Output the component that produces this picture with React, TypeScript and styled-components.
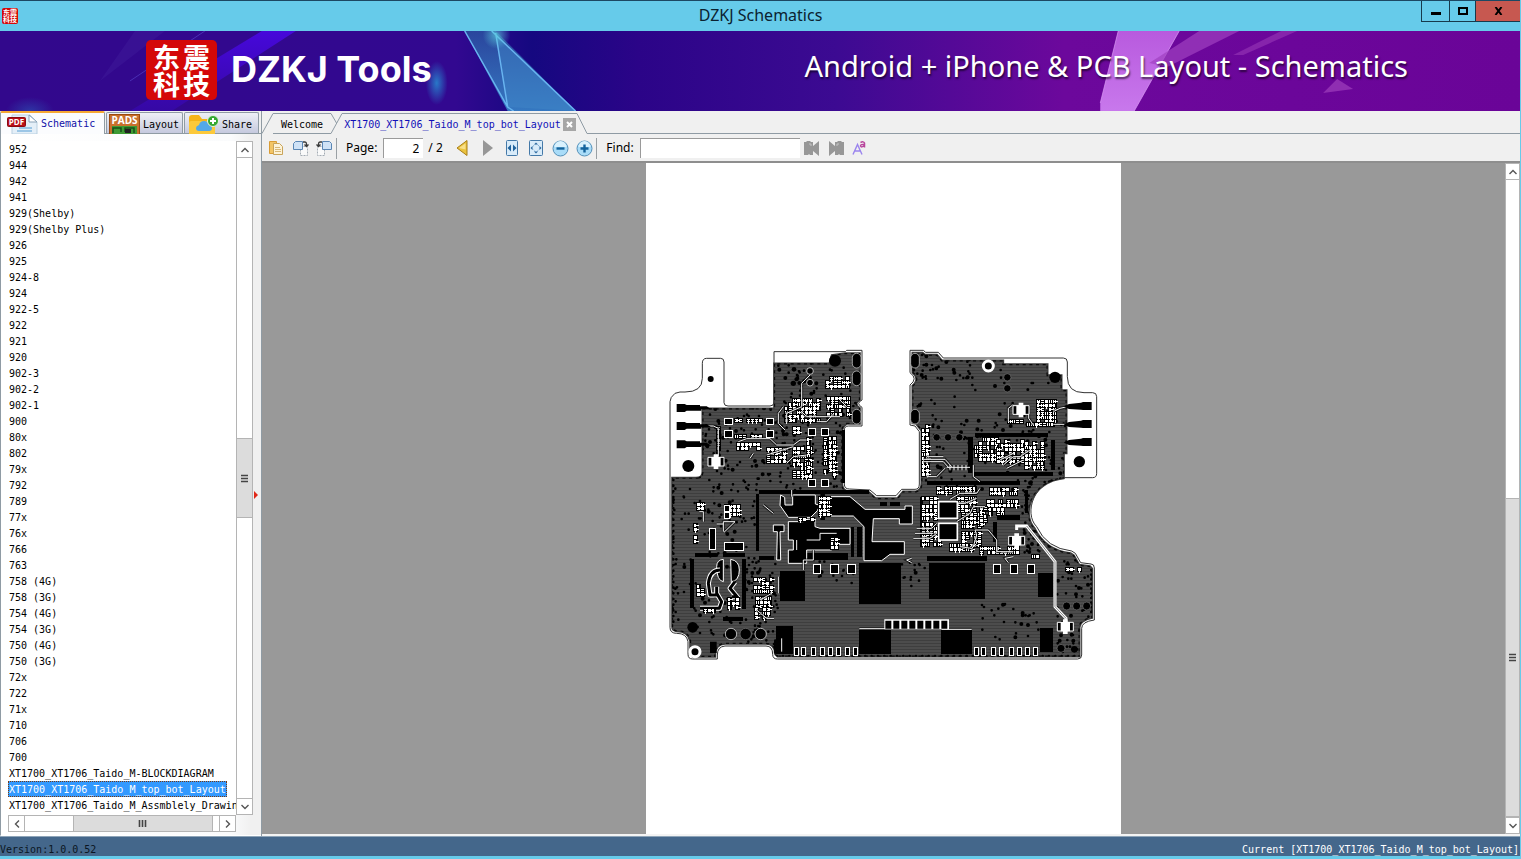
import React from "react";
import styled, { createGlobalStyle, css } from "styled-components";

const mono = `"DejaVu Sans Mono", "Liberation Mono", monospace`;
const ui = `"Noto Sans", "Open Sans", sans-serif`;

const Global = createGlobalStyle`
  * { box-sizing: border-box; }
  body { margin: 0; font-family: ${mono}; font-size: 10px; color: #000; }
  button, input { font: inherit; color: inherit; margin: 0; padding: 0; border: 0; background: none; border-radius: 0; }
  svg { display: block; flex: none; }
`;

/* ---------- window frame ---------- */

const Window = styled.div`
  display: flex;
  flex-direction: column;
  height: 100vh;
  min-height: 480px;
  overflow: hidden;
  background: #f0f0f0;
  border-right: 1px solid #66cbea;
  border-bottom: 3px solid #66cbea;
`;

const TitleBar = styled.header`
  display: grid;
  grid-template-columns: 1fr auto 1fr;
  align-items: center;
  flex: none;
  height: 31px;
  margin-right: -1px;
  border-top: 1px solid #1c4863;
  background: #66cbea;
`;

const Seal = styled.div<{ $large?: boolean }>`
  display: grid;
  grid-template-columns: auto auto;
  place-content: center;
  background: #d40808;
  color: #fff;
  font-family: "Noto Sans CJK SC", sans-serif;
  font-weight: 700;
  ${(p) =>
    p.$large
      ? css`
          width: 71px;
          height: 60px;
          border-radius: 5px;
          font-size: 27px;
          line-height: 27px;
          column-gap: 3px;
        `
      : css`
          width: 16px;
          height: 16px;
          margin-left: 2px;
          border-radius: 2px;
          font-size: 7px;
          line-height: 7px;
        `}
`;

const WindowTitle = styled.h1`
  align-self: start;
  margin: 0;
  font: 400 16px/28px ${ui};
  color: #0b2230;
`;

const WindowButtons = styled.div`
  display: flex;
  justify-self: end;
  align-self: start;
`;

const WindowButton = styled.button<{ $w: number; $close?: boolean }>`
  display: flex;
  align-items: center;
  justify-content: center;
  width: ${(p) => p.$w}px;
  height: 21px;
  border-left: 1px solid #173a4c;
  border-bottom: 1px solid #173a4c;
  background: ${(p) => (p.$close ? "#c75850" : "transparent")};
`;

/* ---------- banner ---------- */

const Banner = styled.div`
  position: relative;
  display: flex;
  align-items: center;
  flex: none;
  height: 80px;
  padding: 0 112px 2px 146px;
  background: #340890;
  color: #fff;
`;

const BannerArt = styled.svg`
  position: absolute;
  inset: 0;
  width: 100%;
  height: 100%;
`;

const Brand = styled.strong`
  z-index: 1;
  margin-left: 14px;
  padding-bottom: 2px;
  font: 700 36px/60px Inter, sans-serif;
`;

const Slogan = styled.span`
  z-index: 1;
  margin-left: auto;
  padding-bottom: 8px;
  white-space: nowrap;
  font: 400 29px/60px ${ui};
  text-shadow: 1px 2px 2px rgba(0, 0, 0, 0.6);
`;

const SealWrap = styled.div`
  z-index: 1;
`;

/* ---------- body ---------- */

const Body = styled.div`
  display: flex;
  flex: 1;
  min-height: 0;
`;

const Side = styled.aside`
  display: flex;
  flex-direction: column;
  flex: none;
  width: 262px;
  border-right: 1px solid #8f9ba4;
`;

const SideTabs = styled.div`
  display: flex;
  align-items: flex-end;
  flex: none;
  height: 23px;
  gap: 1px;
  border-bottom: 1px solid #8f9ba4;
`;

const SideTab = styled.button<{ $active?: boolean; $w: number }>`
  display: flex;
  align-items: center;
  gap: 3px;
  width: ${(p) => p.$w}px;
  height: 21px;
  padding: 2px 0 0 2px;
  border: 1px solid #8f9ba4;
  border-bottom: 0;
  border-radius: 2px 2px 0 0;
  background: linear-gradient(#eef0f6, #c5c9de);
  ${(p) =>
    p.$active &&
    css`
      height: 23px;
      margin-bottom: -1px;
      padding: 0 0 0 6px;
      border-top: 2px solid #f6a834;
      background: #fbfcfe;
      color: #1010a8;
    `}
`;

const SideContent = styled.div`
  display: flex;
  flex: 1;
  min-height: 0;
  padding: 7px 0 3px 7px;
  border-left: 1px solid #8f9ba4;
  border-bottom: 1px solid #fff;
  background: linear-gradient(90deg, #fff, #fafbfc 230px, #f0f0f0 250px);
`;

const ListColumn = styled.div`
  display: flex;
  flex-direction: column;
  flex: 1;
  min-width: 0;
`;

const List = styled.ul`
  flex: 1;
  min-height: 0;
  margin: 0;
  padding: 0;
  overflow: hidden;
  list-style: none;
  background: #fff;
`;

const ListItem = styled.button<{ $selected?: boolean }>`
  display: block;
  height: 16px;
  line-height: 16px;
  padding: 1px 0 0 1px;
  white-space: nowrap;
  ${(p) =>
    p.$selected &&
    css`
      padding: 1px 1px 0;
      color: #fff;
      background: #3399ff;
      outline: 1px dotted #7a3a10;
      outline-offset: -1px;
    `}
`;

const Splitter = styled.div`
  display: flex;
  align-items: center;
  flex: none;
  width: 8px;
  padding-top: 16px;
`;

/* ---------- scroll bars ---------- */

const ScrollBar = styled.div<{ $across?: boolean; $w?: number }>`
  display: flex;
  flex: none;
  flex-direction: ${(p) => (p.$across ? "row" : "column")};
  ${(p) => (p.$across ? "height: 17px;" : `width: ${p.$w ?? 17}px;`)}
  border: 1px solid #b4b4b4;
  background: #fff;
`;

const ScrollArrow = styled.button<{ $across?: boolean }>`
  display: flex;
  align-items: center;
  justify-content: center;
  flex: none;
  ${(p) => (p.$across ? "width: 16px;" : "height: 16px;")}
  background: #fff;
  &:first-child { ${(p) => (p.$across ? "border-right" : "border-bottom")}: 1px solid #b4b4b4; }
  &:last-child { ${(p) => (p.$across ? "border-left" : "border-top")}: 1px solid #b4b4b4; }
`;

const Track = styled.div<{ $grow: number }>`
  flex: ${(p) => p.$grow} 1 0;
`;

const Thumb = styled.div<{ $grow: number; $across?: boolean }>`
  display: flex;
  align-items: center;
  justify-content: center;
  flex: ${(p) => p.$grow} 1 0;
  background: #dcdcdc;
  border: 0 solid #b4b4b4;
  border-width: ${(p) => (p.$across ? "0 1px" : "1px 0")};
`;

const Arrow = ({ turn }: { turn: number }) => (
  <svg width="10" height="10" viewBox="0 0 10 10">
    <path d="M1.5 7 5 3.5 8.5 7" fill="none" stroke="#555" strokeWidth="1.4" transform={`rotate(${turn} 5 5)`} />
  </svg>
);

const Grip = ({ turn = 0 }: { turn?: number }) => (
  <svg width="9" height="9" viewBox="0 0 9 9">
    <path d="M1 1.5h7M1 4.5h7M1 7.5h7" stroke="#444" strokeWidth="1.600" transform={`rotate(${turn} 4.5 4.5)`} />
  </svg>
);

/* ---------- documents ---------- */

const Main = styled.main`
  display: flex;
  flex-direction: column;
  flex: 1;
  min-width: 0;
`;

const DocTabs = styled.div`
  display: flex;
  flex: none;
  height: 23px;
  padding-top: 2px;
`;

const DocTab = styled.button<{ $active?: boolean }>`
  padding: 1px ${(p) => (p.$active ? 2 : 8)}px 0;
  border-top: 1px solid #8f9ba4;
  border-bottom: 1px solid ${(p) => (p.$active ? "transparent" : "#8f9ba4")};
  color: ${(p) => (p.$active ? "#1010b8" : "#000")};
  white-space: nowrap;
`;

const TabClose = styled.button`
  display: flex;
  align-items: center;
  justify-content: center;
  width: 14px;
  border-top: 1px solid #8f9ba4;
`;

const TabRest = styled.div`
  flex: 1;
  border-bottom: 1px solid #8f9ba4;
`;

const Toolbar = styled.div`
  display: flex;
  align-items: center;
  flex: none;
  height: 29px;
  padding: 1px 0 0 2px;
  border-bottom: 2px solid #8e8e8e;
  font: 400 12px/16px ${ui};
`;

const Tool = styled.button`
  display: flex;
  align-items: center;
  justify-content: center;
  flex: none;
  width: 24px;
  height: 24px;
`;

const Divider = styled.span`
  width: 1px;
  height: 21px;
  margin-right: 9px;
  background: #9aa0a4;
`;

const Field = styled.input<{ $w: number }>`
  width: ${(p) => p.$w}px;
  height: 20px;
  margin-left: 6px;
  padding-right: 4px;
  border-top: 1px solid #9a9a9a;
  border-left: 1px solid #9a9a9a;
  background: #fff;
  text-align: ${(p) => (p.$w < 100 ? "right" : "left")};
`;

const PageCount = styled.span`
  width: 27px;
  padding-left: 5px;
  white-space: nowrap;
`;

const Gap = styled.span`
  width: 2px;
`;

const Viewer = styled.div`
  display: flex;
  flex: 1;
  min-height: 0;
  border-bottom: 2px solid #f4f4f4;
`;

const Canvas = styled.div`
  display: flex;
  justify-content: center;
  flex: 1;
  min-width: 0;
  overflow: hidden;
  background: #999;
`;

const Sheet = styled.div`
  flex: none;
  width: 475px;
  padding: 177px 0 0 14px;
  background: #fff;
`;

const StatusBar = styled.footer`
  display: flex;
  align-items: center;
  justify-content: space-between;
  flex: none;
  height: 20px;
  padding: 5px 1px 0 0;
  border-top: 1px solid #8ea4b8;
  background: #44678b;
  color: #0b1622;
`;

const Current = styled.span`
  color: #fff;
`;

/* ---------- icons ---------- */

const PdfIcon = () => (
  <svg width="31" height="20" viewBox="0 0 31 20">
    <path d="M5 1h18l7 7v12H5z" fill="#e4eff8" stroke="#b9cfe0" />
    <path d="M22 1v7h8z" fill="#fff" stroke="#8aa3b8" />
    <path d="M12 14h13M10 17h15" stroke="#9cc6e6" strokeWidth="2" />
    <rect x=".5" y="3.5" width="18" height="9" rx="1" fill="#b80f18" stroke="#8a0a10" />
    <text x="9.500" y="11" textAnchor="middle" fontFamily="Open Sans, sans-serif" fontWeight="700" fontSize="8" fill="#fff">PDF</text>
  </svg>
);

const PadsIcon = () => (
  <svg width="31" height="20" viewBox="0 0 31 20">
    <rect x=".5" y=".5" width="30" height="20" fill="#c8702c" stroke="#9a4a10" />
    <rect x="3" y="12" width="25" height="8" fill="#3e9a34" />
    <path d="M4 19v-5h8v4m4 0v-4h9v5" stroke="#185018" fill="none" strokeWidth="1.500" />
    <rect x="16" y="15" width="6" height="4" fill="#222" />
    <text x="15.500" y="10" textAnchor="middle" fontFamily="Open Sans, sans-serif" fontWeight="700" fontSize="10" fill="#fff">PADS</text>
  </svg>
);

const FolderIcon = () => (
  <svg width="32" height="20" viewBox="0 0 32 20">
    <path d="M2 20V4q0-3 3-3h7l3 4h9q3 0 3 3v12z" fill="#f5b418" />
    <path d="M2 20V9q0-2 2-2h21q3 0 3 3v10z" fill="#fcc93a" />
    <path d="M12 17q-3 0-3-3 0-2 3-3 1-4 5-4 4 0 5 4 3 1 3 3 0 3-3 3z" fill="#52a8e8" />
    <circle cx="26" cy="7" r="5.500" fill="#36a832" stroke="#e6f4e4" />
    <path d="M26 4v6M23 7h6" stroke="#fff" strokeWidth="2" />
  </svg>
);

const CopyIcon = () => (
  <svg width="16" height="16" viewBox="0 0 16 16">
    <path d="M1.500 1.500h7v12h-7z" fill="#f3c565" stroke="#d99c35" />
    <path d="M5.500 3.500h6l3 3v8h-9z" fill="#fdf3d8" stroke="#c9a45a" />
    <path d="M7 7.500h5M7 9.500h6M7 11.500h6" stroke="#d8b878" />
  </svg>
);

const RotateIcon = ({ flip }: { flip?: boolean }) => (
  <svg width="17" height="17" viewBox="0 0 17 17">
    <g transform={flip ? "matrix(-1 0 0 1 17 0)" : undefined}>
      <path d="M8.500 6.500h7v9h-7z" fill="#fafafa" stroke="#a4acb4" strokeDasharray="2 1" />
      <path d="M1.500 3.500l2-2h7v8h-9z" fill="#cfe2f6" stroke="#5a86b4" />
      <path d="M11 2h2q1.500 0 1.500 2v2M12.500 4.500l2 2 2-2" fill="none" stroke="#3a3a3a" strokeWidth="1.300" />
    </g>
  </svg>
);

const PrevIcon = () => (
  <svg width="14" height="18" viewBox="0 0 14 18">
    <path d="M12 1.500v15L2 9z" fill="#eac23e" stroke="#a87e18" strokeLinejoin="round" />
    <path d="M10.500 4.500v6L4 9z" fill="#f8e08a" />
  </svg>
);

const NextIcon = () => (
  <svg width="14" height="18" viewBox="0 0 14 18">
    <path d="M2 1v16l10-8z" fill="#979797" />
  </svg>
);

const FitIcon = ({ whole }: { whole?: boolean }) => (
  <svg width="14" height="16" viewBox="0 0 14 16">
    <rect x={whole ? 0.5 : 1.5} y=".5" width={whole ? 13 : 11} height="15" rx="1" fill="#d8ebf9" stroke="#4479a8" />
    {whole ? (
      <path d="M5 4.500l2-2 2 2zM5 11.500l2 2 2-2zM3.500 6l-2 2 2 2zM10.500 6l2 2-2 2z" fill="#2a669c" stroke="none" />
    ) : (
      <path d="M6 4.500v7L2.500 8zM8 4.500v7L11.500 8z" fill="#21639c" />
    )}
    {whole && <circle cx="7" cy="8" r="3.500" fill="none" stroke="#6a9cc6" strokeDasharray="1.500 1.500" />}
  </svg>
);

const ZoomIcon = ({ plus }: { plus?: boolean }) => (
  <svg width="17" height="17" viewBox="0 0 17 17">
    <circle cx="8.500" cy="8.500" r="7.500" fill="#a9dcf8" stroke="#5590b8" />
    <path d="M2.500 7a6 6 0 0 1 12 0z" fill="#d9f1fd" />
    <path d={plus ? "M4.500 8.500h8M8.500 4.500v8" : "M4.500 8.500h8"} stroke="#14639c" strokeWidth="2.400" />
  </svg>
);

const FindIcon = ({ flip }: { flip?: boolean }) => (
  <svg width="16" height="16" viewBox="0 0 16 16">
    <g transform={flip ? "matrix(-1 0 0 1 16 0)" : undefined}>
      <path d="M0 2h2l1-1h3l1 1h2v4l6-5v15l-6-5v4H6l-1-1-1 1H0z" fill="#979797" />
      <path d="M5 4h2v2" stroke="#c4c4c4" fill="none" />
    </g>
  </svg>
);

const CaseIcon = () => (
  <svg width="15" height="16" viewBox="0 0 15 16">
    <path d="M1 14.500 5.500 4.500 10 14.500M2.500 11h6" fill="none" stroke="#9a84ee" strokeWidth="1.400" />
    <path d="M8.500 2.500q3-1.500 4 .5v4.500M12.500 4.500q-4-.5-4 1.500 1 2 4-.5" fill="none" stroke="#b8459c" strokeWidth="1.500" />
  </svg>
);

/* ---------- circuit board, drawn in thirds of a pixel ---------- */

const OUTLINE =
  "M30 185Q30 172 45 160Q60 154 75 156Q127 156 127 115V70Q127 55 140 55H182Q192 55 192 66V188Q192 198 204 198H330Q342 198 342 186V35H556L560 31H606V180Q586 190 606 202V258H566Q553 258 553 270V432Q553 447 568 447L630 450 650 467H708L725 448H765Q778 448 778 432V275L765 258 750 255V135Q775 116 750 98V31H790L797 37H835L850 54H1210Q1222 54 1222 66V110Q1222 158 1272 158H1298Q1310 158 1310 170V400Q1310 413 1298 413H1212C1120 420 1090 520 1130 560Q1160 625 1235 633L1246 640 1262 668 1293 672Q1303 672 1303 684V840Q1265 845 1265 865V945Q1265 957 1253 957H1010V957H352Q338 957 338 943Q338 918 318 918H195Q172 920 172 945V957H98Q84 957 84 943V905Q80 880 50 880Q30 880 30 862Z";

const COPPER =
  "M127 205H342V70H508L515 45 556 39H600V180Q580 190 600 204V252H560Q546 262 547 275V435Q550 453 565 453L627 456 647 474H712L729 454H768Q784 450 784 430V272L768 252 757 250V137Q780 116 757 98V38H788L795 44H831L846 61H1030V72H1163V105H1205V150H1220V340H1212V415C1115 425 1084 522 1124 564Q1156 630 1232 639L1242 646 1258 674 1290 678 1297 686V834Q1259 842 1259 862V950H352Q344 945 344 940Q344 912 318 912H195Q166 914 166 945V951H98L90 940V903Q84 874 50 874 36 872 36 860V413H108Q127 413 127 395Z";

function rng(seed: number) {
  let s = seed;
  return () => {
    s = (s * 16807) % 2147483647;
    return s / 2147483647;
  };
}

/** Dense field of small parts: solid pads, split pads, and short links between neighbours. */
function cluster(x: number, y: number, w: number, h: number, seed: number) {
  const r = rng(seed * 7919 + 11);
  let white = "";
  let black = "";
  for (let j = 0; j + 9 <= h; j += 12) {
    for (let i = 0; i + 9 <= w; i += 12) {
      const k = r();
      const px = x + i;
      const py = y + j;
      if (k < 0.14) continue;
      black += `M${px - 3} ${py - 3}h15v15h-15z`;
      if (k < 0.45) white += `M${px} ${py}h9v9h-9z`;
      else if (k < 0.6) white += `M${px} ${py}h6v9h-6z`;
      else if (k < 0.8) white += `M${px} ${py}h9v3h-9zM${px} ${py + 6}h9v3h-9z`;
      else white += `M${px} ${py}h3v9h-3zM${px + 6} ${py}h3v9h-3z`;
      if (r() < 0.35) white += `M${px + 3} ${py + 3}h12v3h-12z`;
      if (r() < 0.3) white += `M${px + 3} ${py + 3}h3v12h-3z`;
    }
  }
  return { white, black };
}

const CLUSTERS: number[][] = [
  [375, 178, 110, 72], [498, 112, 72, 40], [500, 170, 70, 60], [400, 262, 30, 30],
  [232, 310, 80, 26], [322, 325, 60, 50], [400, 320, 60, 100], [508, 290, 30, 118],
  [440, 295, 14, 110], [492, 295, 14, 110], [170, 262, 18, 80], [225, 236, 90, 12], [225, 284, 90, 12],
  [1130, 180, 62, 75], [1045, 240, 50, 14], [1100, 250, 85, 14], [785, 255, 24, 160],
  [945, 295, 72, 80], [1010, 300, 90, 80], [1095, 305, 62, 85], [830, 440, 120, 28],
  [990, 445, 90, 30], [980, 480, 100, 28], [787, 470, 50, 80], [787, 550, 60, 74],
  [890, 470, 60, 50], [905, 520, 70, 55], [905, 575, 60, 56], [975, 505, 60, 26],
  [870, 612, 70, 30], [960, 500, 30, 60],
  [960, 620, 120, 26], [1105, 645, 36, 16], [103, 540, 20, 80], [112, 490, 32, 26],
  [194, 496, 50, 40], [283, 715, 60, 50], [288, 770, 54, 38], [285, 805, 50, 34],
  [110, 735, 26, 40], [203, 775, 34, 40], [132, 808, 36, 12], [1217, 685, 54, 16],
  [512, 595, 26, 44], [418, 535, 56, 14], [478, 470, 34, 66],
];

const BLOCKS: number[][] = [
  [360, 693, 75, 90], [598, 668, 126, 125], [808, 668, 167, 110], [1133, 698, 47, 74], [1140, 865, 38, 72],
  [843, 870, 92, 72], [598, 870, 94, 73], [348, 858, 50, 85],
  [298, 450, 330, 12], [288, 462, 8, 170], [90, 658, 12, 145], [245, 658, 12, 150], [105, 638, 64, 12],
  [190, 638, 64, 12], [190, 830, 60, 14], [800, 422, 280, 12], [945, 278, 220, 12], [925, 290, 14, 110],
  [940, 396, 240, 12], [1172, 300, 12, 90], [573, 560, 10, 90], [592, 560, 14, 90], [298, 648, 45, 12],
  [545, 270, 9, 160], [780, 470, 10, 150], [1095, 450, 8, 70], [1010, 525, 70, 14], [800, 648, 180, 16],
  [660, 486, 20, 12], [690, 486, 30, 12], [425, 640, 140, 20], [1000, 545, 12, 60],
];

const OPEN_PADS: number[][] = [
  [460, 674, 22, 26], [512, 674, 22, 26], [563, 674, 22, 26],
  [1000, 674, 22, 26], [1051, 674, 22, 26], [1102, 674, 22, 26],
  ...[402, 424, 455, 480, 505, 530, 557, 580].map((x) => [x, 923, 12, 24]),
  ...[942, 964, 994, 1018, 1047, 1071, 1097, 1121].map((x) => [x, 923, 12, 24]),
  [446, 266, 20, 20], [485, 266, 20, 20], [446, 418, 20, 20], [485, 418, 20, 20],
  [194, 234, 22, 20], [320, 234, 20, 20], [194, 272, 22, 20], [320, 272, 20, 20],
  [192, 606, 58, 26], [148, 565, 18, 62], [194, 496, 14, 18], [194, 518, 14, 18],
];

const DOTS: number[][] = [
  [152, 117, 9], [85, 378, 18], [525, 62, 18], [1185, 112, 17], [1258, 365, 17], [98, 862, 16],
  [400, 130, 8], [402, 88, 7], [1243, 928, 10],
];

/* x, y, radius, ring colour */
const RINGS: [number, number, number, string][] = [
  [450, 93, 10, "#fff"], [450, 128, 10, "#fff"],
  [213, 882, 17, "#fff"], [257, 882, 17, "#777"], [302, 882, 17, "#fff"],
  [1042, 112, 11, "#777"], [1042, 145, 11, "#777"],
  [830, 292, 11, "#777"], [864, 292, 11, "#777"], [898, 292, 11, "#777"],
  [1220, 798, 12, "#777"], [1250, 798, 12, "#777"], [1280, 798, 12, "#777"], [1203, 925, 12, "#777"],
];

const POWER = [
  "M362 465L374 472 375 495H398V465H466V492L480 496 472 512 452 532H385L360 496Z",
  "M500 470H570L615 508H735V498H757V552H718V536H640L636 605H733V643H690L665 662H612V560L580 528H500Z",
  "M340 555H372V575H360L362 660H350L352 575H340Z",
  "M385 545H430V538H465V560L480 565H570V613H515V630H440V670H385V630H400V600H385Z",
  "M190 658Q170 660 170 680 170 722 190 725Z",
  "M212 658Q238 662 238 690 238 720 214 728Z",
];

const TRACES = [
  "M450 105L425 130V200L380 220V250M425 215L440 230H540M470 245H500L520 222",
  "M125 258H160L175 265V350M370 200L355 220V250L375 270",
  "M235 305L260 296H330L350 315H400L420 300H440M320 345L400 320",
  "M440 345L400 350 380 370M270 355L280 340M540 180L560 200",
  "M1180 215L1200 205 1222 200M1180 253H1222M1045 245V205L1058 195M1106 200V235L1120 255",
  "M790 365H850L868 385M850 350H800M800 410H830L855 385M940 375V410L960 425",
  "M790 358H855L875 380M860 382h70M870 375v16M882 375v16M894 375v16M906 375v16M918 375v16",
  "M1030 375L1060 350H1080L1110 330M1040 385L1090 360M1020 360L1060 340",
  "M870 478L900 460H950L960 445M880 490H915L950 475M890 545L930 520 940 500 975 500M900 620L935 625 950 610",
  "M940 620L950 585 945 570H985L1010 600V635H1060M765 580H820M760 595H810L830 580M770 565H815L830 550",
  "M395 470V450M310 495L340 520M410 600V630M440 600H480V580H530M460 630V660H430V690",
  "M190 575V545H225L192 577M130 545V515H118M170 552H190M150 575L165 565",
  "M755 655L740 660 755 668M598 866H690M845 868H935M365 895V935M355 710V760",
  "M290 810L320 835H342M300 780L335 760M1045 668L1035 655 1060 650",
];

const LEFT_LINKS = ["M180 690Q150 690 145 730L150 765H175M170 740V760L185 785 178 805H120M225 725L210 745 235 775M215 770H232"];

function vias() {
  const r = rng(4242);
  let d = "";
  const dot = (x: number, y: number, s: number) => {
    d += `M${x - s} ${y}a${s} ${s} 0 1 0 ${2 * s} 0a${s} ${s} 0 1 0 ${-2 * s} 0`;
  };
  const scatter = (x: number, y: number, w: number, h: number, n: number) => {
    for (let i = 0; i < n; i++) dot(Math.round(x + r() * w), Math.round(y + r() * h), r() < 0.2 ? 6 : 4);
  };
  scatter(36, 205, 300, 245, 120);
  scatter(36, 450, 250, 450, 130);
  scatter(345, 70, 255, 380, 160);
  scatter(760, 60, 450, 190, 50);
  scatter(760, 40, 180, 80, 24);
  scatter(790, 250, 430, 200, 120);
  scatter(1085, 420, 100, 220, 80);
  scatter(1190, 650, 100, 290, 60);
  scatter(255, 650, 100, 290, 55);
  scatter(950, 790, 190, 110, 28);
  scatter(440, 660, 150, 70, 18);
  scatter(725, 660, 70, 80, 14);
  for (let x = 350; x < 1260; x += 19) dot(x, 948, 4);
  for (let y = 420; y < 860; y += 17) dot(40, y, 4);
  for (let y = 690; y < 830; y += 14) dot(1294, y, 4);
  return d;
}

const VIAS = vias();
const FIELDS = CLUSTERS.map(([x, y, w, h], i) => cluster(x, y, w, h, i + 1));

const boxes = (list: number[][]) => list.map(([x, y, w, h]) => `M${x} ${y}h${w}v${h}h${-w}z`).join("");

const Switch = ({ x, y }: { x: number; y: number }) => (
  <g>
    <path d={`M${x - 24} ${y - 13}h48v26h-48z`} fill="#000" stroke="#fff" strokeWidth="3" />
    <path d={`M${x - 7} ${y - 22}h14v44h-14zM${x - 14} ${y - 14}h28v28h-28z`} fill="#fff" />
  </g>
);

const Board = () => (
  <svg width="440" height="324" viewBox="0 0 1320 972" role="img" aria-label="Circuit board, bottom layer">
    <defs>
      <pattern id="hatch" width="12" height="9" patternUnits="userSpaceOnUse">
        <rect width="12" height="9" fill="#4c4c4c" />
        <rect width="12" height="3" fill="#3e3e3e" />
      </pattern>
      <clipPath id="copper"><path d={COPPER} /></clipPath>
    </defs>
    <path d={OUTLINE} fill="#fff" stroke="#333" strokeWidth="3" />
    <path d={COPPER} fill="url(#hatch)" stroke="#3c3c3c" strokeWidth="5" />
    <g clipPath="url(#copper)">
      <path d={VIAS} fill="#000" />
      <path d={COPPER} fill="none" stroke="#0a0a0a" strokeWidth="7" strokeDasharray="9 11" />
    </g>
    <path d={boxes(BLOCKS)} fill="#000" shapeRendering="crispEdges" />
    {POWER.map((d) => <path key={d} d={d} fill="#000" stroke="#fff" strokeWidth="3" />)}
    {LEFT_LINKS.map((d) => (
      <g key={d} fill="none" strokeLinejoin="round">
        <path d={d} stroke="#fff" strokeWidth="15" />
        <path d={d} stroke="#000" strokeWidth="9" />
      </g>
    ))}
    <path d="M488 450V540" stroke="#000" strokeWidth="14" />
    {FIELDS.map((f, i) => (
      <g key={i} shapeRendering="crispEdges">
        <path d={f.black} fill="#000" />
        <path d={f.white} fill="#fff" />
      </g>
    ))}
    <path d={TRACES.join("")} fill="none" stroke="#000" strokeWidth="9" opacity=".6" />
    <path d={TRACES.join("")} fill="none" stroke="#f4f4f4" strokeWidth="3" />
    <path d={boxes(OPEN_PADS)} fill="#000" stroke="#fff" strokeWidth="3" shapeRendering="crispEdges" />
    <path d="M673 838h194v30h-194z" fill="#fff" />
    <path d={boxes([0, 1, 2, 3, 4, 5, 6, 7].map((i) => [676 + i * 24, 842, 18, 24]))} fill="#000" />
    {[485, 550].map((y) => <rect key={y} x="836" y={y} width="56" height="50" fill="#000" stroke="#fff" strokeWidth="5" />)}
    <path d="M1070 570V558H1100L1185 665V800L1218 835V850" fill="none" stroke="#fff" strokeWidth="9" />
    <path d="M1100 558L1185 665V800L1218 835" fill="none" stroke="#888" strokeWidth="3" />
    <Switch x={1070} y={602} />
    <Switch x={1216} y={860} />
    <Switch x={168} y={365} />
    <Switch x={1083} y={210} />
    {RINGS.map(([x, y, r, c]) => <circle key={`${x}-${y}`} cx={x} cy={y} r={r} fill="#000" stroke={c} strokeWidth="2" />)}
    {DOTS.map(([x, y, r]) => <circle key={`${x}-${y}`} cx={x} cy={y} r={r} fill="#000" />)}
    {[[105, 935], [985, 78]].map(([x, y]) => (
      <circle key={x} cx={x} cy={y} r="15" fill="#000" stroke="#fff" strokeWidth="9" />
    ))}
    {[[590, 62], [590, 115], [590, 230], [765, 62], [765, 230]].map(([x, y]) => (
      <rect key={`${x}-${y}`} x={x - 13} y={y - 22} width="26" height="44" rx="13" fill="#000" stroke="#ddd" strokeWidth="2" />
    ))}
    {[204, 258, 313].map((y) => (
      <path key={y} d={`M50 ${y - 12}h24l6 3h40v4h20l14 9h-30v4h-44l-6 4h-24z`} fill="#000" />
    ))}
    {[198, 252, 306].map((y) => (
      <path key={y} d={`M1295 ${y - 12}h-26l-6 2-36 4-14 6v3l14 6 36 2 6 1h26z`} fill="#000" />
    ))}
    <path d="M150 905h20v34h-20zM342 902h18v38h-18z" fill="#000" />
  </svg>
);

/* ---------- data ---------- */

const ITEMS = [
  "952", "944", "942", "941", "929(Shelby)", "929(Shelby Plus)", "926", "925", "924-8", "924", "922-5", "922",
  "921", "920", "902-3", "902-2", "902-1", "900", "80x", "802", "79x", "792", "789", "77x", "76x", "766", "763",
  "758 (4G)", "758 (3G)", "754 (4G)", "754 (3G)", "750 (4G)", "750 (3G)", "72x", "722", "71x", "710", "706", "700",
  "XT1700_XT1706_Taido_M-BLOCKDIAGRAM", "XT1700_XT1706_Taido_M_top_bot_Layout", "XT1700_XT1706_Taido_M_Assmblely_Drawing",
];
const SELECTED = "XT1700_XT1706_Taido_M_top_bot_Layout";

const SealText = () => (
  <>
    <span>东</span>
    <span>震</span>
    <span>科</span>
    <span>技</span>
  </>
);

const Art = () => (
  <BannerArt viewBox="0 0 1521 80" preserveAspectRatio="none" aria-hidden="true">
    <defs>
      <linearGradient id="sky">
        <stop offset="0" stopColor="#32088c" />
        <stop offset=".3" stopColor="#320890" />
        <stop offset=".35" stopColor="#150880" />
        <stop offset=".42" stopColor="#2b0488" />
        <stop offset=".55" stopColor="#3c0a92" />
        <stop offset=".7" stopColor="#6c089c" />
        <stop offset="1" stopColor="#6a0498" />
      </linearGradient>
      <linearGradient id="blue" x2="0" y2="1">
        <stop offset="0" stopColor="#2a50a0" />
        <stop offset="1" stopColor="#3a8ccc" />
      </linearGradient>
      <linearGradient id="beam" x2="0" y2="1">
        <stop offset="0" stopColor="#4a08e8" />
        <stop offset="1" stopColor="#3608a8" />
      </linearGradient>
      <linearGradient id="pink" x2="0" y2="1">
        <stop offset="0" stopColor="#b85ade" />
        <stop offset="1" stopColor="#c878ec" />
      </linearGradient>
      <radialGradient id="glow">
        <stop offset="0" stopColor="#2878c8" />
        <stop offset="1" stopColor="#2878c8" stopOpacity="0" />
      </radialGradient>
      <radialGradient id="spark">
        <stop offset="0" stopColor="#5cd0e0" />
        <stop offset="1" stopColor="#5cd0e0" stopOpacity="0" />
      </radialGradient>
    </defs>
    <rect width="1521" height="80" fill="url(#sky)" />
    <path d="M262 0h34L172 80h-42z" fill="url(#beam)" opacity=".85" />
    <path d="M135 0h30L100 50z" fill="#4a2aa8" opacity=".25" />
    <path d="M205 0L130 50" stroke="#5a4ad0" opacity=".6" />
    <ellipse cx="437" cy="52" rx="11" ry="22" fill="url(#glow)" />
    <ellipse cx="30" cy="80" rx="24" ry="14" fill="url(#glow)" opacity=".4" />
    <path d="M465 0h31l80 80h-68z" fill="url(#blue)" opacity=".85" />
    <path d="M496 4l12 72 68 4z" fill="#3f86c8" opacity=".5" />
    <path d="M465 0l43 76 6 4M496 2l12 74M492 0l84 80" fill="none" stroke="#68b4f0" strokeWidth="1.500" />
    <circle cx="497" cy="4" r="14" fill="url(#spark)" opacity=".7" />
    <path d="M1119 0h61l-45 80h-34v-8z" fill="url(#pink)" />
    <path d="M1180 0l-45 80M1119 0l-18 72" stroke="#dc9cf6" opacity=".7" />
    <path d="M1200 0h40l-72 36-18-4z" fill="#a040c0" opacity=".7" />
    <path d="M1282 0h16l-54 24h-10z" fill="#9838b8" opacity=".6" />
    <path d="M1338 48l16 10-30 4z" fill="#9838b8" opacity=".8" />
  </BannerArt>
);

const SlantUp = () => (
  <svg width="11" height="21" viewBox="0 0 11 21">
    <path d="M0 20.500L11 .5" fill="none" stroke="#8f9ba4" />
  </svg>
);
const SlantCross = () => (
  <svg width="11" height="21" viewBox="0 0 11 21">
    <path d="M0 20.500L11 .5M0 .5L5.500 10" fill="none" stroke="#8f9ba4" />
  </svg>
);
const SlantDown = () => (
  <svg width="10" height="21" viewBox="0 0 10 21">
    <path d="M0 .5L10 20.500" fill="none" stroke="#8f9ba4" />
  </svg>
);

const ListBarWrap = styled.div`
  display: flex;
  flex: none;
  padding-bottom: 17px;
`;

const ListBar = () => (
  <ListBarWrap>
    <ScrollBar>
      <ScrollArrow aria-label="Scroll up"><Arrow turn={0} /></ScrollArrow>
      <Track $grow={281} />
      <Thumb $grow={78}><Grip /></Thumb>
      <Track $grow={281} />
      <ScrollArrow aria-label="Scroll down"><Arrow turn={180} /></ScrollArrow>
    </ScrollBar>
  </ListBarWrap>
);

export default function App() {
  return (
    <>
      <Global />
      <Window>
        <TitleBar>
          <Seal><SealText /></Seal>
          <WindowTitle>DZKJ Schematics</WindowTitle>
          <WindowButtons>
            <WindowButton $w={28} aria-label="Minimize">
              <svg width="10" height="10"><path d="M0 7.500h10" stroke="#000" strokeWidth="3" /></svg>
            </WindowButton>
            <WindowButton $w={26} aria-label="Maximize">
              <svg width="10" height="8"><rect x="1" y="1" width="8" height="6" fill="none" stroke="#000" strokeWidth="2" /></svg>
            </WindowButton>
            <WindowButton $w={46} $close aria-label="Close">
              <svg width="9" height="8"><path d="M1.500 0l6 8M7.500 0l-6 8" stroke="#000" strokeWidth="2" /></svg>
            </WindowButton>
          </WindowButtons>
        </TitleBar>

        <Banner>
          <Art />
          <SealWrap><Seal $large><SealText /></Seal></SealWrap>
          <Brand>DZKJ Tools</Brand>
          <Slogan>Android + iPhone &amp; PCB Layout - Schematics</Slogan>
        </Banner>

        <Body>
          <Side>
            <SideTabs>
              <SideTab $active $w={105}><PdfIcon />Schematic</SideTab>
              <SideTab $w={77}><PadsIcon />Layout</SideTab>
              <SideTab $w={75}><FolderIcon />Share</SideTab>
            </SideTabs>
            <SideContent>
              <ListColumn>
                <List>
                  {ITEMS.map((t) => (
                    <li key={t}><ListItem $selected={t === SELECTED}>{t}</ListItem></li>
                  ))}
                </List>
                <ScrollBar $across>
                  <ScrollArrow $across aria-label="Scroll left"><Arrow turn={-90} /></ScrollArrow>
                  <Track $grow={48} />
                  <Thumb $across $grow={140}><Grip turn={90} /></Thumb>
                  <Track $grow={6} />
                  <ScrollArrow $across aria-label="Scroll right"><Arrow turn={90} /></ScrollArrow>
                </ScrollBar>
              </ListColumn>
              <ListBar />
              <Splitter>
                <svg width="6" height="8" viewBox="0 0 6 8"><path d="M1 0v8l4-4z" fill="#e02818" /></svg>
              </Splitter>
            </SideContent>
          </Side>

          <Main>
            <DocTabs>
              <SlantUp />
              <DocTab>Welcome</DocTab>
              <SlantCross />
              <DocTab $active>XT1700_XT1706_Taido_M_top_bot_Layout</DocTab>
              <TabClose aria-label="Close tab">
                <svg width="13" height="13" viewBox="0 0 13 13">
                  <rect width="13" height="13" fill="#a6a6a6" />
                  <path d="M4 4l5 5M9 4l-5 5" stroke="#fff" strokeWidth="2" />
                </svg>
              </TabClose>
              <SlantDown />
              <TabRest />
            </DocTabs>
            <Toolbar>
              <Tool aria-label="Copy"><CopyIcon /></Tool>
              <Tool aria-label="Rotate right"><RotateIcon /></Tool>
              <Tool aria-label="Rotate left"><RotateIcon flip /></Tool>
              <Divider />
              <label htmlFor="page">Page:</label>
              <Field id="page" $w={40} defaultValue="2" />
              <PageCount>/ 2</PageCount>
              <Tool aria-label="Previous page"><PrevIcon /></Tool>
              <Gap />
              <Tool aria-label="Next page"><NextIcon /></Tool>
              <Tool aria-label="Fit width"><FitIcon /></Tool>
              <Tool aria-label="Fit page"><FitIcon whole /></Tool>
              <Tool aria-label="Zoom out"><ZoomIcon /></Tool>
              <Tool aria-label="Zoom in"><ZoomIcon plus /></Tool>
              <Divider />
              <label htmlFor="find">Find:</label>
              <Field id="find" $w={160} />
              <Tool aria-label="Find previous"><FindIcon /></Tool>
              <Tool aria-label="Find next"><FindIcon flip /></Tool>
              <Tool aria-label="Match case"><CaseIcon /></Tool>
            </Toolbar>
            <Viewer>
              <Canvas>
                <Sheet><Board /></Sheet>
              </Canvas>
              <ScrollBar $w={15}>
                <ScrollArrow aria-label="Scroll up"><Arrow turn={0} /></ScrollArrow>
                <Track $grow={321} />
                <Thumb $grow={320}><Grip /></Thumb>
                <ScrollArrow aria-label="Scroll down"><Arrow turn={180} /></ScrollArrow>
              </ScrollBar>
            </Viewer>
          </Main>
        </Body>

        <StatusBar>
          <span>Version:1.0.0.52</span>
          <Current>Current [XT1700_XT1706_Taido_M_top_bot_Layout]</Current>
        </StatusBar>
      </Window>
    </>
  );
}
